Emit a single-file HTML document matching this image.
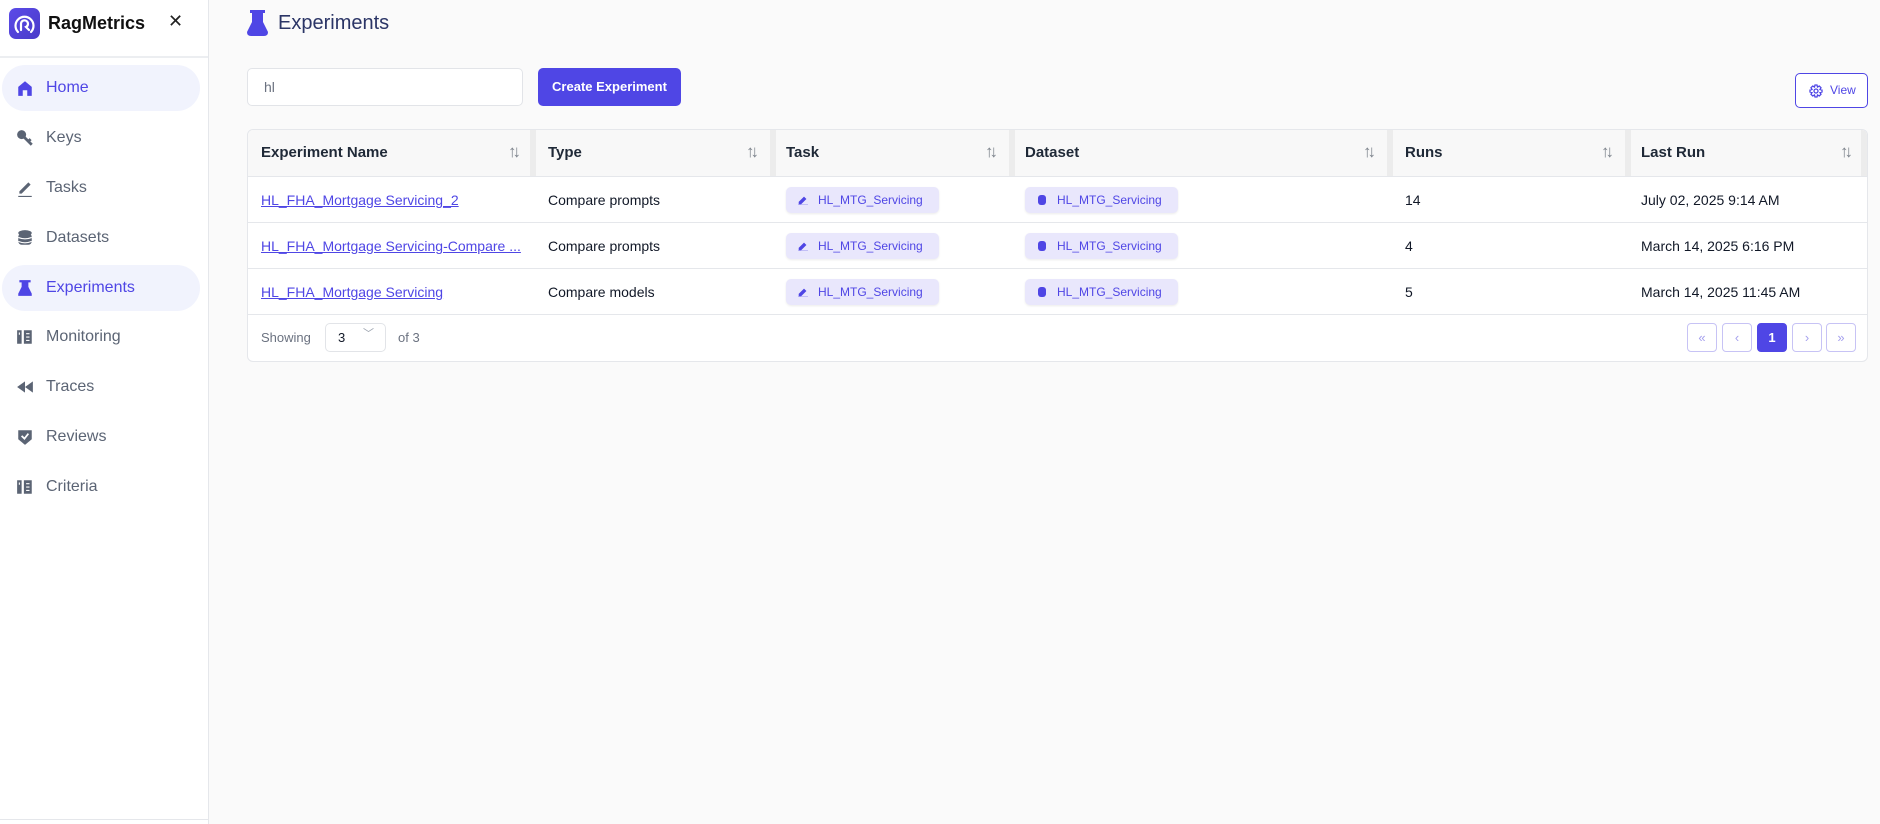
<!DOCTYPE html>
<html><head><meta charset="utf-8">
<style>
*{box-sizing:border-box;margin:0;padding:0}
body{width:1880px;height:824px;background:#fafafa;font-family:"Liberation Sans",sans-serif;position:relative;overflow:hidden;color:#111827}
.sb{position:absolute;left:0;top:0;width:209px;height:824px;background:#fff;border-right:1px solid #e5e7eb}
.logo{position:absolute;left:9px;top:8px;width:31px;height:31px;border-radius:7px;background:linear-gradient(135deg,#5b4be8,#4a3bc9)}
.brand{position:absolute;left:48px;top:13px;font-size:18px;font-weight:bold;color:#111}
.x{position:absolute;left:168px;top:11px;font-size:18px;color:#222}
.hd{position:absolute;left:0;top:56px;width:208px;border-top:2px solid #eceef1}
.nav{position:absolute;left:2px;width:198px;height:46px;border-radius:23px;display:flex;align-items:center;font-size:16px;color:#5b6474}
.nav.a{background:#f1f3fd;color:#4f46e5}
.nav svg{position:absolute;left:14px}
.nav span{position:absolute;left:44px}
.bl{position:absolute;left:0;top:819px;width:208px;border-top:1px solid #e5e7eb}
.title{position:absolute;left:278px;top:12px;font-size:20px;color:#2b3566}
.inp{position:absolute;left:247px;top:68px;width:276px;height:38px;background:#fff;border:1px solid #e2e4e8;border-radius:5px;font-size:14px;color:#6b7280;padding:10px 16px}
.btn{position:absolute;left:538px;top:68px;width:143px;height:38px;background:#4f46e5;border-radius:5px;color:#fff;font-size:13px;font-weight:bold;text-align:center;line-height:38px}
.view{position:absolute;left:1795px;top:73px;width:73px;height:35px;border:1px solid #4f46e5;border-radius:5px;color:#4f46e5;font-size:12px;line-height:33px;padding-left:34px;background:#fff}
.tbl{position:absolute;left:247px;top:129px;width:1621px;height:233px;background:#fff;border:1px solid #e5e7eb;border-radius:6px;overflow:hidden}
.th{position:absolute;top:0;left:0;width:100%;height:47px;background:#f8f8f8;border-bottom:1px solid #e5e7eb}
.sep{position:absolute;top:0;width:6px;height:46px;background:#ececec}
.c{position:absolute;font-size:14px;white-space:nowrap}
.h{font-size:15px;font-weight:bold;color:#1f2937}
.rl{position:absolute;left:0;width:100%;border-top:1px solid #e5e7eb}
a{color:#4f46e5}
.bd{position:absolute;width:153px;height:26px;background:#e9e7fc;border-radius:5px;color:#4f46e5;font-size:12px;line-height:26px;padding-left:32px;box-shadow:0 1px 2px rgba(0,0,0,.08)}
.bd svg{position:absolute;left:12px;top:8px}
.srt{position:absolute;font-size:17px;color:#7d838c;letter-spacing:-4px}
.pg{position:absolute;top:193px;width:30px;height:29px;border:1px solid #c7c3f5;border-radius:4px;color:#a5a0ee;font-size:13px;text-align:center;line-height:27px;background:#fff}
.pg.a{background:#4f46e5;border-color:#4f46e5;color:#fff;font-weight:bold}
</style></head><body>
<div class="sb">
 <div class="logo"><svg width="31" height="31" viewBox="0 0 31 31" fill="none" stroke="#fff" stroke-width="2.2" stroke-linecap="round"><path d="M9 24 A9 9 0 1 1 22 24"/><path d="M12 22 V15.5 A3.5 3.5 0 1 1 17 19 L20 22"/></svg></div>
 <div class="brand">RagMetrics</div>
 <div class="x">✕</div>
 <div class="hd"></div>
 <div class="nav a" style="top:65px"><svg width="18" height="18" viewBox="0 0 16 16"><path d="M2 7 L8 2 L14 7 V15 H10 V10 H6 V15 H2Z" fill="#4f46e5"/></svg><span>Home</span></div>
 <div class="nav" style="top:115px"><svg width="18" height="18" viewBox="0 0 16 16"><circle cx="5" cy="5" r="4" fill="#5b6474"/><path d="M7 7 L14 14 M11 11 L13 9" stroke="#5b6474" stroke-width="2.5"/></svg><span>Keys</span></div>
 <div class="nav" style="top:165px"><svg width="18" height="18" viewBox="0 0 16 16"><path d="M3 11 L11 3 L13 5 L5 13 H3Z" fill="#5b6474"/><path d="M2 15.5 H14" stroke="#5b6474"/></svg><span>Tasks</span></div>
 <div class="nav" style="top:215px"><svg width="18" height="18" viewBox="0 0 16 16"><ellipse cx="8" cy="3.5" rx="6" ry="2.5" fill="#5b6474"/><rect x="2" y="4" width="12" height="10" rx="3" fill="#5b6474"/><path d="M2 7.5 Q8 10 14 7.5 M2 11 Q8 13.5 14 11" stroke="#fff" fill="none"/></svg><span>Datasets</span></div>
 <div class="nav a" style="top:265px"><svg width="18" height="18" viewBox="0 0 16 16"><path d="M3 1 H13 V3 H11 V7 L14 13 V15 H2 V13 L5 7 V3 H3Z" fill="#4f46e5"/></svg><span>Experiments</span></div>
 <div class="nav" style="top:314px"><svg width="18" height="18" viewBox="0 0 16 16"><rect x="1" y="2" width="4" height="12" fill="#5b6474"/><rect x="7" y="2" width="7" height="12" fill="#5b6474"/><path d="M3 4 V6 M9 5 H12 M9 8 H12 M9 11 H12" stroke="#fff"/></svg><span>Monitoring</span></div>
 <div class="nav" style="top:364px"><svg width="18" height="18" viewBox="0 0 16 16"><path d="M8 3 V13 L1 8Z M15 3 V13 L8 8Z" fill="#5b6474"/></svg><span>Traces</span></div>
 <div class="nav" style="top:414px"><svg width="18" height="18" viewBox="0 0 16 16"><path d="M2 2 H14 V10 L8 15 L2 10Z" fill="#5b6474"/><path d="M5 7 L7.5 9.5 L11 5" stroke="#fff" stroke-width="1.6" fill="none"/></svg><span>Reviews</span></div>
 <div class="nav" style="top:464px"><svg width="18" height="18" viewBox="0 0 16 16"><rect x="1" y="2" width="4" height="12" fill="#5b6474"/><rect x="7" y="2" width="7" height="12" fill="#5b6474"/><path d="M3 4 V6 M9 5 H12 M9 8 H12 M9 11 H12" stroke="#fff"/></svg><span>Criteria</span></div>
 <div class="bl"></div>
</div>
<svg style="position:absolute;left:247px;top:10px" width="21" height="26" viewBox="0 0 21 26"><path d="M3 0 H18 V3 H16 V12 L21 22 Q21 26 17 26 H4 Q0 26 0 22 L5 12 V3 H3Z" fill="#4f46e5"/></svg>
<div class="title">Experiments</div>
<div class="inp">hl</div>
<div class="btn">Create Experiment</div>
<div class="view"><svg style="position:absolute;left:13px;top:10px" width="14" height="14" viewBox="0 0 14 14" fill="none" stroke="#4f46e5" stroke-width="1.3"><circle cx="7" cy="7" r="2"/><path d="M6 1 H8 L8.5 3 L10.3 2 L12 3.7 L11 5.5 L13 6 V8 L11 8.5 L12 10.3 L10.3 12 L8.5 11 L8 13 H6 L5.5 11 L3.7 12 L2 10.3 L3 8.5 L1 8 V6 L3 5.5 L2 3.7 L3.7 2 L5.5 3Z"/></svg>View</div>
<div class="tbl">
 <div class="th"></div>
 <div class="sep" style="left:282px"></div><div class="sep" style="left:522px"></div><div class="sep" style="left:761px"></div><div class="sep" style="left:1139px"></div><div class="sep" style="left:1377px"></div><div class="sep" style="left:1613px"></div>
 <div class="c h" style="left:13px;top:14px">Experiment Name</div>
 <div class="c h" style="left:300px;top:14px">Type</div>
 <div class="c h" style="left:538px;top:14px">Task</div>
 <div class="c h" style="left:777px;top:14px">Dataset</div>
 <div class="c h" style="left:1157px;top:14px">Runs</div>
 <div class="c h" style="left:1393px;top:14px">Last Run</div>
 <div class="srt" style="left:260px;top:12px">↑↓</div><div class="srt" style="left:498px;top:12px">↑↓</div><div class="srt" style="left:737px;top:12px">↑↓</div><div class="srt" style="left:1115px;top:12px">↑↓</div><div class="srt" style="left:1353px;top:12px">↑↓</div><div class="srt" style="left:1592px;top:12px">↑↓</div>
 <div class="rl" style="top:92px"></div><div class="rl" style="top:138px"></div><div class="rl" style="top:184px"></div>
 <div class="c" style="left:13px;top:62px"><a href="#">HL_FHA_Mortgage Servicing_2</a></div>
 <div class="c" style="left:300px;top:62px">Compare prompts</div>
 <div class="c" style="left:1157px;top:62px">14</div>
 <div class="c" style="left:1393px;top:62px">July 02, 2025 9:14 AM</div>
 <div class="c" style="left:13px;top:108px"><a href="#">HL_FHA_Mortgage Servicing-Compare ...</a></div>
 <div class="c" style="left:300px;top:108px">Compare prompts</div>
 <div class="c" style="left:1157px;top:108px">4</div>
 <div class="c" style="left:1393px;top:108px">March 14, 2025 6:16 PM</div>
 <div class="c" style="left:13px;top:154px"><a href="#">HL_FHA_Mortgage Servicing</a></div>
 <div class="c" style="left:300px;top:154px">Compare models</div>
 <div class="c" style="left:1157px;top:154px">5</div>
 <div class="c" style="left:1393px;top:154px">March 14, 2025 11:45 AM</div>
 <div class="bd" style="left:538px;top:57px"><svg width="10" height="10" viewBox="0 0 10 10"><path d="M1 7 L6 2 L8 4 L3 9 H1Z M0 10 H10" fill="#4f46e5" stroke="#4f46e5" stroke-width=".6"/></svg>HL_MTG_Servicing</div>
 <div class="bd" style="left:538px;top:103px"><svg width="10" height="10" viewBox="0 0 10 10"><path d="M1 7 L6 2 L8 4 L3 9 H1Z M0 10 H10" fill="#4f46e5" stroke="#4f46e5" stroke-width=".6"/></svg>HL_MTG_Servicing</div>
 <div class="bd" style="left:538px;top:149px"><svg width="10" height="10" viewBox="0 0 10 10"><path d="M1 7 L6 2 L8 4 L3 9 H1Z M0 10 H10" fill="#4f46e5" stroke="#4f46e5" stroke-width=".6"/></svg>HL_MTG_Servicing</div>
 <div class="bd" style="left:777px;top:57px"><svg width="10" height="10" viewBox="0 0 10 10"><rect x="1" y="0" width="8" height="10" rx="3" fill="#4f46e5"/></svg>HL_MTG_Servicing</div>
 <div class="bd" style="left:777px;top:103px"><svg width="10" height="10" viewBox="0 0 10 10"><rect x="1" y="0" width="8" height="10" rx="3" fill="#4f46e5"/></svg>HL_MTG_Servicing</div>
 <div class="bd" style="left:777px;top:149px"><svg width="10" height="10" viewBox="0 0 10 10"><rect x="1" y="0" width="8" height="10" rx="3" fill="#4f46e5"/></svg>HL_MTG_Servicing</div>
 <div class="c" style="left:13px;top:200px;font-size:13px;color:#6b7280">Showing</div>
 <div style="position:absolute;left:77px;top:193px;width:61px;height:29px;border:1px solid #e2e4e8;border-radius:5px;font-size:13px;line-height:27px;padding-left:12px">3<span style="position:absolute;left:37px;top:-3px;color:#9ca3af;font-size:11px">﹀</span></div>
 <div class="c" style="left:150px;top:200px;font-size:13px;color:#6b7280">of 3</div>
 <div class="pg" style="left:1439px">«</div>
 <div class="pg" style="left:1474px">‹</div>
 <div class="pg a" style="left:1509px">1</div>
 <div class="pg" style="left:1544px">›</div>
 <div class="pg" style="left:1578px">»</div>
</div>
</body></html>
